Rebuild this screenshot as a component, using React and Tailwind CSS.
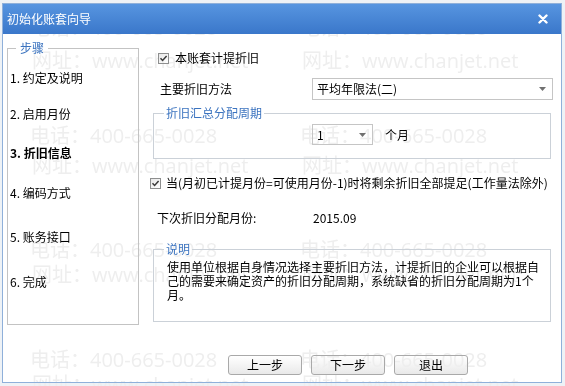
import React from "react";

function Check() {
  return (
    <span className="w-[11px] h-[11px] border border-[#8e8f8f] bg-linear-to-br from-[#e8e8e8] to-white flex items-center justify-center shrink-0">
      <svg width="9" height="9" viewBox="0 0 9 9">
        <path d="M1.5 4.3 L3.6 6.5 L7.6 2" stroke="#3a3a3a" strokeWidth="1.5" fill="none" />
      </svg>
    </span>
  );
}

function Arrow() {
  return (
    <svg width="7" height="4" viewBox="0 0 7 4" className="shrink-0">
      <path d="M0 0H7L3.5 4Z" fill="#707070" />
    </svg>
  );
}

function Btn({ children }) {
  return (
    <div className="w-[74px] h-[20px] border border-[#a9a9a9] rounded-[3px] bg-linear-to-b from-white to-[#e9e9e9] flex items-center justify-center leading-none">
      {children}
    </div>
  );
}

const phones = [
  [30, 18], [300, 18],
  [30, 126], [300, 126],
  [30, 240], [300, 240],
  [30, 350], [300, 350],
];
const webs = [
  [32, 51], [302, 51],
  [32, 156], [302, 156],
  [32, 265], [302, 265],
  [32, 375], [302, 375],
];

export default function App() {
  return (
    <div className="relative isolate w-[565px] h-[386px] overflow-hidden bg-[#eef2f6] font-['Noto_Sans_CJK_SC',sans-serif] text-[12px] text-black">
      <div className="ml-[2px] mt-[3px] w-[560px] h-[380px] border border-[#8fb0da] flex flex-col bg-white">
        {/* header */}
        <div className="h-[30px] shrink-0 bg-linear-to-b from-[#5795e0] to-[#3a77ca] flex items-center justify-between pl-[4px] pr-[13px]">
          <span className="text-white leading-none">初始化账套向导</span>
          <svg width="10" height="10" viewBox="0 0 10 10">
            <path d="M1.5 1.5 L8.5 8.5 M8.5 1.5 L1.5 8.5" stroke="white" strokeWidth="2.4" strokeLinecap="round" />
          </svg>
        </div>

        {/* body */}
        <div className="flex-1 flex flex-col">
          <div className="flex h-[291px] shrink-0">
            {/* steps */}
            <fieldset className="ml-[4px] mt-[7px] w-[132px] h-[284px] border border-[#c3c3c3] shrink-0">
              <legend className="ml-[8px] px-[4px] leading-[14px] text-[#3b73bf]">步骤</legend>
              <div className="pl-[2px] flex flex-col leading-[14px] whitespace-pre">
                <div className="mt-[16px]">1. 约定及说明</div>
                <div className="mt-[22px]">2. 启用月份</div>
                <div className="mt-[25px] font-bold">3. 折旧信息</div>
                <div className="mt-[26px]">4. 编码方式</div>
                <div className="mt-[30px]">5. 账务接口</div>
                <div className="mt-[31px]">6. 完成</div>
              </div>
            </fieldset>

            {/* right */}
            <div className="ml-[11px] w-[410px] flex flex-col">
              <div className="mt-[17px] h-[14px] flex items-center pl-[8px] gap-[6px] leading-[14px]">
                <Check />
                <span>本账套计提折旧</span>
              </div>

              <div className="mt-[13px] h-[22px] flex items-center">
                <span className="pl-[10px] w-[162px] shrink-0 leading-[14px]">主要折旧方法</span>
                <div className="h-[22px] w-[241px] border border-[#c5c5c5] bg-white flex items-center justify-between pl-[4px] pr-[6px]">
                  <span className="leading-[14px]">平均年限法(二)</span>
                  <Arrow />
                </div>
              </div>

              <fieldset className="mt-[6px] ml-[3px] w-[398px] border border-[#cbd1d8]">
                <legend className="ml-[10px] px-[2px] leading-[14px] text-[#3b73bf]">折旧汇总分配周期</legend>
                <div className="flex items-center pt-[4px] pb-[13px] pl-[158px]">
                  <div className="h-[21px] w-[61px] border border-[#c5c5c5] bg-white flex items-center justify-between pl-[4px] pr-[6px]">
                    <span className="leading-[14px]">1</span>
                    <Arrow />
                  </div>
                  <span className="ml-[12px] leading-[14px]">个月</span>
                </div>
              </fieldset>

              <div className="mt-[17px] h-[14px] flex items-center gap-[5px] whitespace-nowrap leading-[14px]">
                <Check />
                <span>当(月初已计提月份=可使用月份-1)时将剩余折旧全部提足(工作量法除外)</span>
              </div>

              <div className="mt-[21px] h-[14px] flex items-center leading-[14px]">
                <span className="pl-[7px] w-[163px] shrink-0">下次折旧分配月份:</span>
                <span>2015.09</span>
              </div>

              <fieldset className="mt-[17px] ml-[3px] w-[398px] border border-[#cbd1d8]">
                <legend className="ml-[10px] px-[2px] leading-[14px] text-[#3b73bf]">说明</legend>
                <div className="pl-[13px] pt-[4px] pb-[19px] leading-[14px] whitespace-nowrap">
                  <div>使用单位根据自身情况选择主要折旧方法，计提折旧的企业可以根据自</div>
                  <div>己的需要来确定资产的折旧分配周期，系统缺省的折旧分配周期为1个</div>
                  <div>月。</div>
                </div>
              </fieldset>
            </div>
          </div>

          <div className="mt-[30px] flex gap-[9px] pl-[225px]">
            <Btn>上一步</Btn>
            <Btn>下一步</Btn>
            <Btn>退出</Btn>
          </div>
        </div>
      </div>

      {/* watermark overlay */}
      {phones.map(([x, y], i) => (
        <span
          key={"p" + i}
          className="absolute z-10 pointer-events-none mix-blend-darken whitespace-nowrap text-[20px] leading-[20px] text-[#eeeeee] font-['Open_Sans','Noto_Sans_CJK_SC',sans-serif]"
          style={{ left: x, top: y }}
        >
          电话：400-665-0028
        </span>
      ))}
      {webs.map(([x, y], i) => (
        <span
          key={"w" + i}
          className="absolute z-10 pointer-events-none mix-blend-darken whitespace-nowrap text-[20px] leading-[20px] text-[#eeeeee] font-['Open_Sans','Noto_Sans_CJK_SC',sans-serif]"
          style={{ left: x, top: y }}
        >
          网址：www.chanjet.net
        </span>
      ))}
    </div>
  );
}
